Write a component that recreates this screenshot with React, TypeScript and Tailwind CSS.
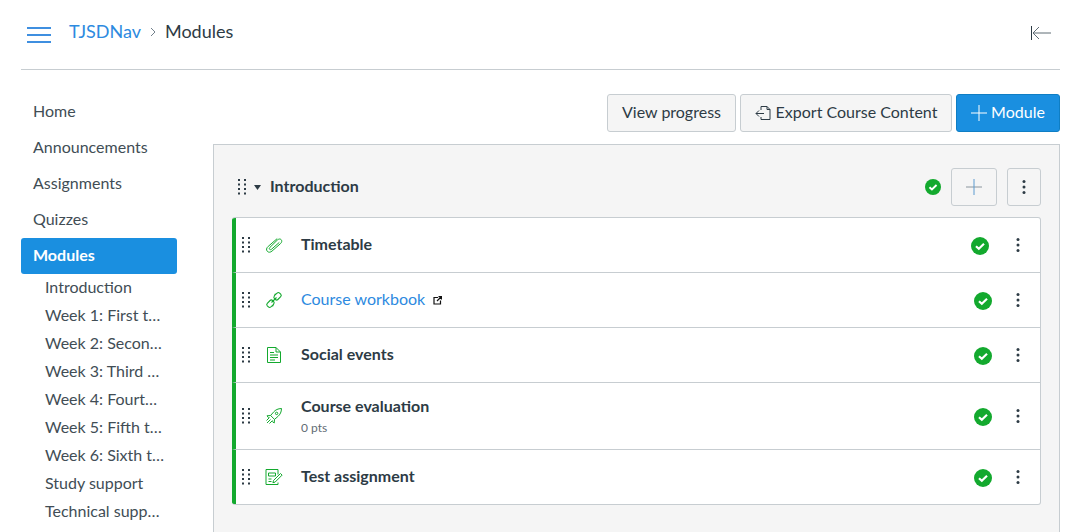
import type { ReactNode } from "react";

const navItems = ["Home", "Announcements", "Assignments", "Quizzes"];
const subItems = [
  "Introduction",
  "Week 1: First topic",
  "Week 2: Second topic",
  "Week 3: Third topic",
  "Week 4: Fourth topic",
  "Week 5: Fifth topic",
  "Week 6: Sixth topic",
  "Study support",
  "Technical support",
];

function DragHandle({ className = "" }: { className?: string }) {
  return (
    <svg width="8" height="16" viewBox="0 0 8 16" className={className} fill="#2d3b45">
      {[1, 5.5, 10, 14.5].map((y) => (
        <g key={y}>
          <rect x="0" y={y - 1} width="2" height="2" />
          <rect x="6" y={y - 1} width="2" height="2" />
        </g>
      ))}
    </svg>
  );
}

function Check({ size = 18 }: { size?: number }) {
  return (
    <svg width={size} height={size} viewBox="0 0 18 18">
      <circle cx="9" cy="9" r="9" fill="#13a92e" />
      <path d="M5 9.2l2.8 2.6L13 6.8" fill="none" stroke="#fff" strokeWidth="2.2" />
    </svg>
  );
}

function Kebab() {
  return (
    <svg width="4" height="16" viewBox="0 0 4 16" fill="#2d3b45">
      <circle cx="2" cy="2.5" r="1.5" />
      <circle cx="2" cy="8" r="1.5" />
      <circle cx="2" cy="13.5" r="1.5" />
    </svg>
  );
}

function PlusIcon({ color, vertical, size }: { color: string; vertical?: string; size: number }) {
  return (
    <svg width={size} height={size} viewBox="0 0 16 16" stroke={color} strokeWidth="1">
      <path d="M0 8h16" />
      <path d="M8 0v16" stroke={vertical ?? color} />
    </svg>
  );
}

function AttachIcon() {
  return (
    <svg width="18" height="18" viewBox="0 0 18 18" fill="none" stroke="#13a92e" strokeWidth="1">
      <path d="M12.2 2.6 3.2 10.4c-1.9 1.7-2.1 3.6-.9 4.9 1.2 1.3 3.1 1.2 4.8-.3l8.4-7.4c1.4-1.3 1.6-2.9.7-3.9-.9-1-2.4-.9-3.8.3L5 11.3c-.8.7-.9 1.5-.4 2 .5.6 1.3.5 2-.1l7.7-6.8" />
    </svg>
  );
}

function LinkIcon() {
  return (
    <svg width="18" height="18" viewBox="0 0 18 18" fill="none" stroke="#13a92e" strokeWidth="1.1">
      <path d="M10.4 3.7l1.7-1.6c.8-.7 1.8-.7 2.5 0l1.1 1.1c.7.8.7 1.8 0 2.5l-2.8 2.8c-.7.7-1.7.7-2.5 0l-1.1-1.1c-.6-.6-.6-1.2-.2-1.9l1.3-2.8z" />
      <path d="M7.6 14.3l-1.7 1.6c-.8.7-1.8.7-2.5 0l-1.1-1.1c-.7-.8-.7-1.8 0-2.5l2.8-2.8c.7-.7 1.7-.7 2.5 0l1.1 1.1c.6.6.6 1.2.2 1.9l-1.3 2.8z" />
      <path d="M6.5 11.5l5-5" />
    </svg>
  );
}

function PageIcon() {
  return (
    <svg width="18" height="18" viewBox="0 0 18 18" fill="none" stroke="#13a92e" strokeWidth="1">
      <path d="M2.5 1.5h8.5l4.5 4.5v10.5h-13z" />
      <path d="M11 1.5V6h4.5" />
      <path d="M5 6.5h4M5 9h8M5 11.5h8M5 14h5" strokeWidth="1.2" />
    </svg>
  );
}

function QuizIcon() {
  return (
    <svg width="18" height="18" viewBox="0 0 18 18" fill="none" stroke="#13a92e" strokeWidth="1">
      <path d="M16.5 1.5c-3.5.1-6 1.3-8 3.6L5.6 8.5l3.9 3.9 3.4-2.9c2.3-2 3.5-4.5 3.6-8z" />
      <circle cx="11.6" cy="6.4" r="1.2" />
      <path d="M5.6 8.5 2 8.8l1.6 2M9.5 12.4 9.2 16l-2-1.6M1.5 13.5l3-3M4.5 16.5l3-3M2 16l3.5-3.5" />
    </svg>
  );
}

function AssignmentIcon() {
  return (
    <svg width="18" height="18" viewBox="0 0 18 18" fill="none" stroke="#13a92e" strokeWidth="1">
      <path d="M13 6.5V1.5H1v15h12v-2" />
      <path d="M3.5 5h7v3h-7zM3.5 11h3M3.5 13.5h3" />
      <path d="M8.5 12.5l7-7 1.6 1.6-7 7-2.2.6z" />
    </svg>
  );
}

function ActionButton({ children, className }: { children: ReactNode; className: string }) {
  return (
    <button className={`flex h-[38px] items-center justify-center rounded-[3px] border pb-[2px] text-base ${className}`}>
      {children}
    </button>
  );
}

function ModuleRow({
  icon,
  title,
  sub,
  link,
  height,
  checkMargin,
  last,
}: {
  icon: ReactNode;
  title: string;
  sub?: string;
  link?: boolean;
  height: string;
  checkMargin: string;
  last?: boolean;
}) {
  return (
    <div className={`flex items-center border-l-4 border-l-[#13a92e] ${height} ${last ? "" : "border-b border-b-[#c7cdd1]"}`}>
      <DragHandle className="ml-[6px] shrink-0" />
      <div className="ml-[15px] flex w-[18px] shrink-0 justify-center">{icon}</div>
      <div className="mb-[2px] ml-[18px] min-w-0 flex-1">
        {link ? (
          <div className="flex items-center text-base text-[#2d8ae0]">
            {title}
            <svg width="9" height="9" viewBox="0 0 9 9" className="ml-[8px] mt-[3px]" fill="none" stroke="#111" strokeWidth="1.2">
              <path d="M5 1.5H1v6.5h6.5V4.5M4 5l4-4M5.5 .6h3v3" />
            </svg>
          </div>
        ) : (
          <div className="text-base leading-[22px] font-bold text-[#2d3b45]">{title}</div>
        )}
        {sub && <div className="mt-[3px] text-xs leading-[16px] text-[#5f6c75]">{sub}</div>}
      </div>
      <div className={`mt-[2px] shrink-0 ${checkMargin}`}>
        <Check />
      </div>
      <div className="mr-[20px] flex w-[4px] shrink-0 justify-center">
        <Kebab />
      </div>
    </div>
  );
}

export default function App() {
  return (
    <div className="h-[532px] overflow-hidden bg-white pr-[17px] pl-[21px] font-['Lato',sans-serif] text-[#2d3b45]">
      <header className="flex h-[70px] items-center border-b border-[#c7cdd1]">
        <div className="ml-[6px] flex h-[16px] w-[24px] flex-col justify-between">
          <div className="h-[2px] bg-[#3f8fe0]" />
          <div className="h-[2px] bg-[#3f8fe0]" />
          <div className="h-[2px] bg-[#3f8fe0]" />
        </div>
        <div className="mb-[8px] ml-[18px] flex items-center text-lg">
          <span className="text-[#2d8ae0]">TJSDNav</span>
          <svg width="6" height="10" viewBox="0 0 6 10" className="mx-[9px] mt-[3px]" fill="none" stroke="#73818c" strokeWidth="1">
            <path d="M1 1l4 4-4 4" />
          </svg>
          <span>Modules</span>
        </div>
        <svg width="21" height="14" viewBox="0 0 21 14" className="mr-[9px] mb-[4px] ml-auto" fill="none" stroke="#5f6c75" strokeWidth="1">
          <path d="M1.5 0v14" stroke="#2d3b45" />
          <path d="M21 7H3M9 1 3 7l6 6" />
        </svg>
      </header>

      <div className="flex">
        <nav className="w-[156px] shrink-0 pt-[24px] text-base text-[#2d3b45]">
          {navItems.map((item) => (
            <div key={item} className="flex h-[36px] items-center px-[12px] pb-[2px] text-[#414d55]">
              {item}
            </div>
          ))}
          <div className="flex h-[36px] items-center rounded-[3px] bg-[#1a8fe0] px-[12px] pb-[2px] font-bold text-white">Modules</div>
          <div>
            {subItems.map((item) => (
              <div key={item} className="h-[28px] truncate pr-[12px] pl-[24px] text-base leading-[26px] text-[#414d55]">
                {item}
              </div>
            ))}
          </div>
        </nav>

        <main className="ml-[36px] min-w-0 flex-1 pt-[24px]">
          <div className="flex justify-end gap-[4px]">
            <ActionButton className="w-[129px] border-[#c7cdd1] bg-[#f5f5f5]">View progress</ActionButton>
            <ActionButton className="w-[212px] border-[#c7cdd1] bg-[#f5f5f5]">
              <svg width="16" height="16" viewBox="0 0 16 16" className="mr-[5px] mt-[2px]" fill="none" stroke="#2d3b45" strokeWidth="1">
                <path d="M6 5V1.5h6l3 3v10H6V12M12 1.5v3h3M9 8.5H1M4 5.5l-3 3 3 3" />
              </svg>
              Export Course Content
            </ActionButton>
            <ActionButton className="w-[104px] border-[#0f7ec4] bg-[#1a8fe0] text-white">
              <span className="mt-[2px] mr-[4px]">
                <PlusIcon color="#ffffff" size={16} />
              </span>
              Module
            </ActionButton>
          </div>

          <section className="mt-[12px] h-[400px] border border-[#c7cdd1] bg-[#f5f5f5] pt-[23px] pr-[18px] pl-[18px]">
            <div className="flex h-[38px] items-center">
              <DragHandle className="ml-[6px]" />
              <svg width="7" height="5" viewBox="0 0 7 5" className="ml-[8px]" fill="#2d3b45">
                <path d="M0 0h7L3.5 5z" />
              </svg>
              <span className="mb-[2px] ml-[9px] text-base font-bold">Introduction</span>
              <div className="ml-auto">
                <Check size={16} />
              </div>
              <button className="ml-[10px] flex h-[38px] w-[46px] items-center justify-center rounded-[3px] border border-[#c7cdd1]">
                <PlusIcon color="#8b969e" vertical="#5d9bd0" size={16} />
              </button>
              <button className="ml-[10px] flex h-[38px] w-[34px] items-center justify-center rounded-[3px] border border-[#c7cdd1]">
                <Kebab />
              </button>
            </div>

            <div className="mt-[11px] h-[288px] overflow-hidden rounded-[3px] border border-l-0 border-[#c7cdd1] bg-white">
              <ModuleRow icon={<AttachIcon />} title="Timetable" height="h-[55px]" checkMargin="mr-[27px]" />
              <ModuleRow icon={<LinkIcon />} title="Course workbook" link height="h-[55px]" checkMargin="mr-[24px]" />
              <ModuleRow icon={<PageIcon />} title="Social events" height="h-[55px]" checkMargin="mr-[24px]" />
              <ModuleRow icon={<QuizIcon />} title="Course evaluation" sub="0 pts" height="h-[67px]" checkMargin="mr-[24px]" />
              <ModuleRow icon={<AssignmentIcon />} title="Test assignment" height="h-[54px]" checkMargin="mr-[24px]" last />
            </div>
          </section>
        </main>
      </div>
    </div>
  );
}
